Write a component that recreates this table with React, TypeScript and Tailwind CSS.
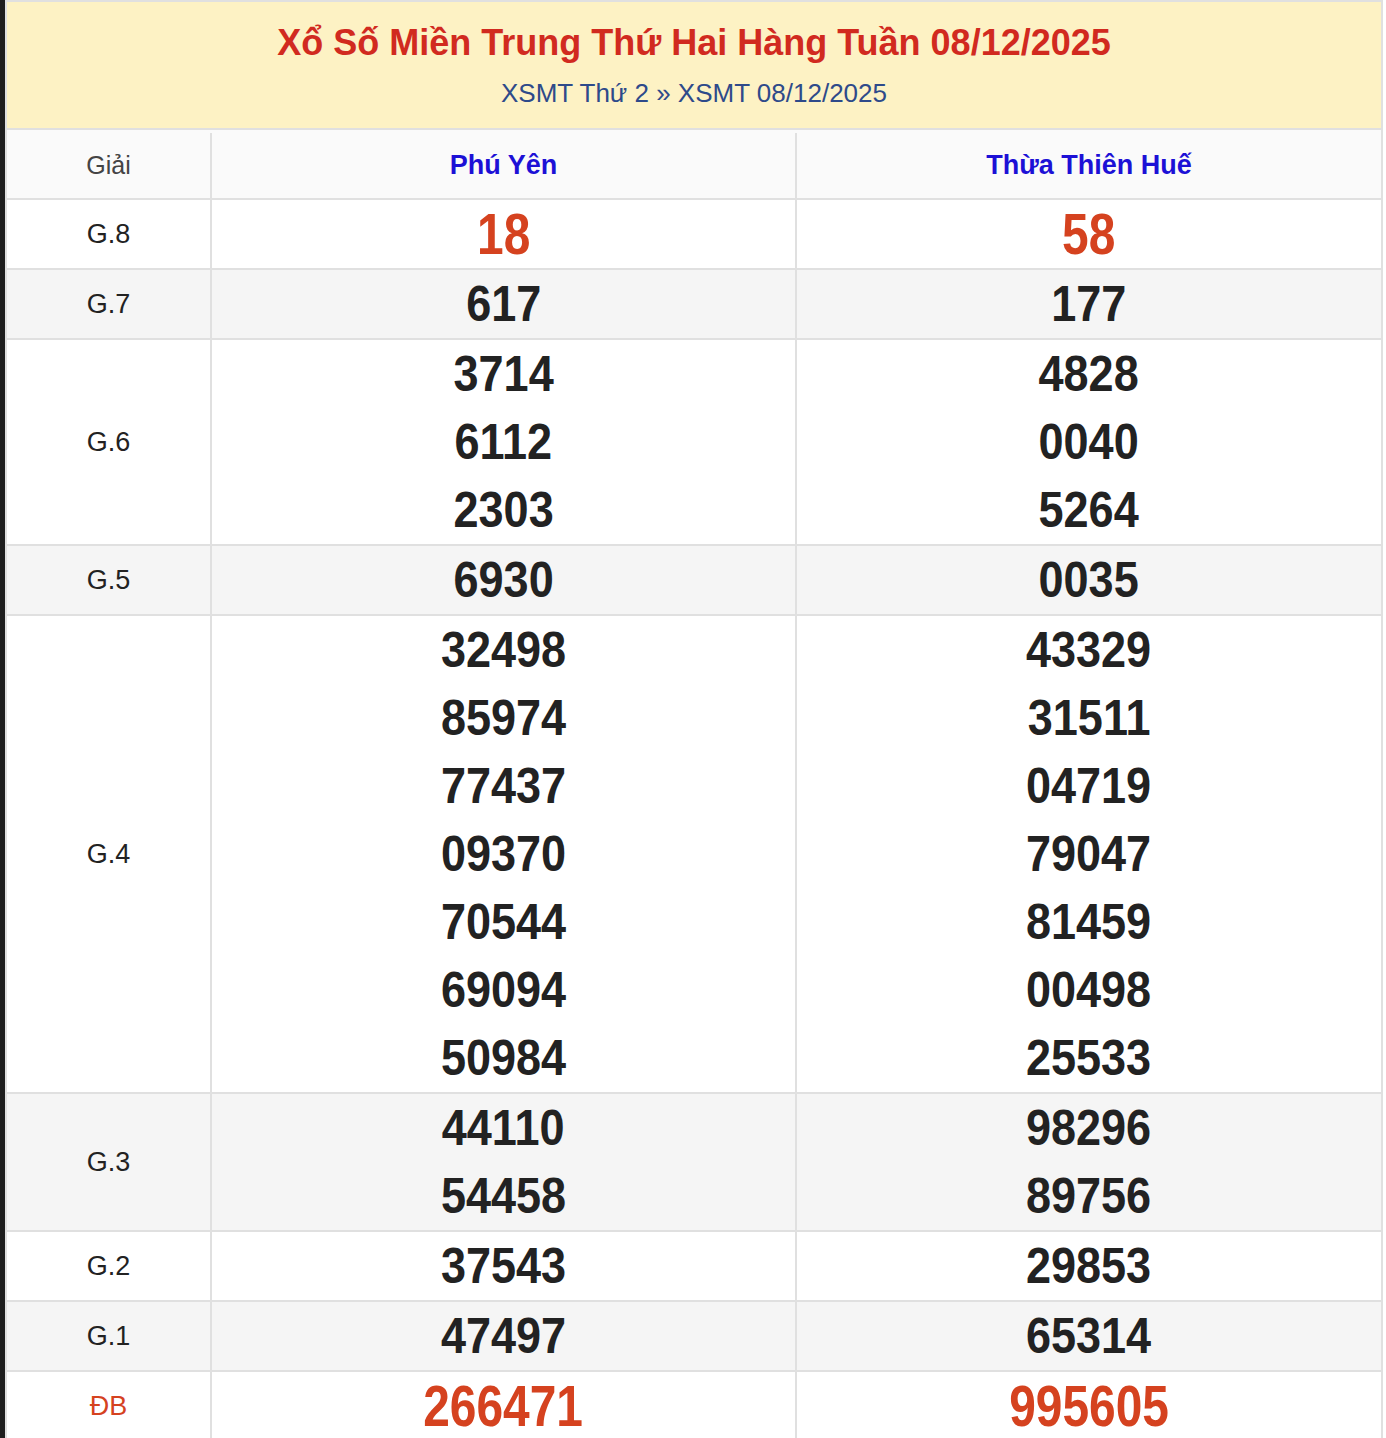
import React from "react";

type Prize = {
  label: string;
  left: string[];
  right: string[];
  special?: "big" | "db";
};

const prizes: Prize[] = [
  { label: "G.8", left: ["18"], right: ["58"], special: "big" },
  { label: "G.7", left: ["617"], right: ["177"] },
  { label: "G.6", left: ["3714", "6112", "2303"], right: ["4828", "0040", "5264"] },
  { label: "G.5", left: ["6930"], right: ["0035"] },
  {
    label: "G.4",
    left: ["32498", "85974", "77437", "09370", "70544", "69094", "50984"],
    right: ["43329", "31511", "04719", "79047", "81459", "00498", "25533"],
  },
  { label: "G.3", left: ["44110", "54458"], right: ["98296", "89756"] },
  { label: "G.2", left: ["37543"], right: ["29853"] },
  { label: "G.1", left: ["47497"], right: ["65314"] },
  { label: "ĐB", left: ["266471"], right: ["995605"], special: "db" },
];

function NumberCell({ values, special }: { values: string[]; special?: Prize["special"] }) {
  return (
    <div className="flex flex-col items-center">
      {values.map((v, i) => (
        <div key={i} className="flex h-[68px] items-center justify-center">
          {special ? (
            <span className="inline-block scale-x-[0.84] text-[57px] font-bold leading-none text-[#d5421f]">
              {v}
            </span>
          ) : (
            <span className="inline-block scale-x-[0.9] text-[50px] font-bold leading-none text-[#222]">
              {v}
            </span>
          )}
        </div>
      ))}
    </div>
  );
}

export default function App() {
  return (
    <div className="flex min-h-screen bg-white font-['Liberation_Sans',Arial,sans-serif]">
      <div className="w-[5px] shrink-0 bg-[#1e1e1e]" />
      <div className="w-[1378px] shrink-0 self-start border-2 border-[#e0e0e0]">
        <div className="flex h-[126px] flex-col items-center bg-[#fdf2c4] pt-[19px]">
          <h1 className="text-[36px] font-bold leading-[44px] text-[#d12a1f]">
            Xổ Số Miền Trung Thứ Hai Hàng Tuần 08/12/2025
          </h1>
          <div className="mt-[13px] text-[26px] leading-[30px] text-[#2e4a8a]">
            XSMT Thứ 2 » XSMT 08/12/2025
          </div>
        </div>

        <div className="flex h-[70px] border-t-2 border-[#e0e0e0] bg-[#fafafa] pt-[3px]">
          <div className="flex w-[205px] shrink-0 items-center justify-center border-r-2 border-[#e0e0e0] text-[25px] text-[#444]">
            Giải
          </div>
          <div className="flex w-[585px] shrink-0 items-center justify-center border-r-2 border-[#e0e0e0] text-[27px] font-bold text-[#1c10d6]">
            Phú Yên
          </div>
          <div className="flex flex-1 items-center justify-center text-[27px] font-bold text-[#1c10d6]">
            Thừa Thiên Huế
          </div>
        </div>

        {prizes.map((p, idx) => (
          <div
            key={p.label}
            className={`flex border-t-2 border-[#e0e0e0] ${idx % 2 === 1 ? "bg-[#f5f5f5]" : "bg-white"}`}
          >
            <div
              className={`flex w-[205px] shrink-0 items-center justify-center border-r-2 border-[#e0e0e0] text-[27px] ${
                p.special === "db" ? "text-[#d5421f]" : "text-[#222]"
              }`}
            >
              {p.label}
            </div>
            <div className="w-[585px] shrink-0 border-r-2 border-[#e0e0e0]">
              <NumberCell values={p.left} special={p.special} />
            </div>
            <div className="flex-1">
              <NumberCell values={p.right} special={p.special} />
            </div>
          </div>
        ))}
      </div>
    </div>
  );
}
